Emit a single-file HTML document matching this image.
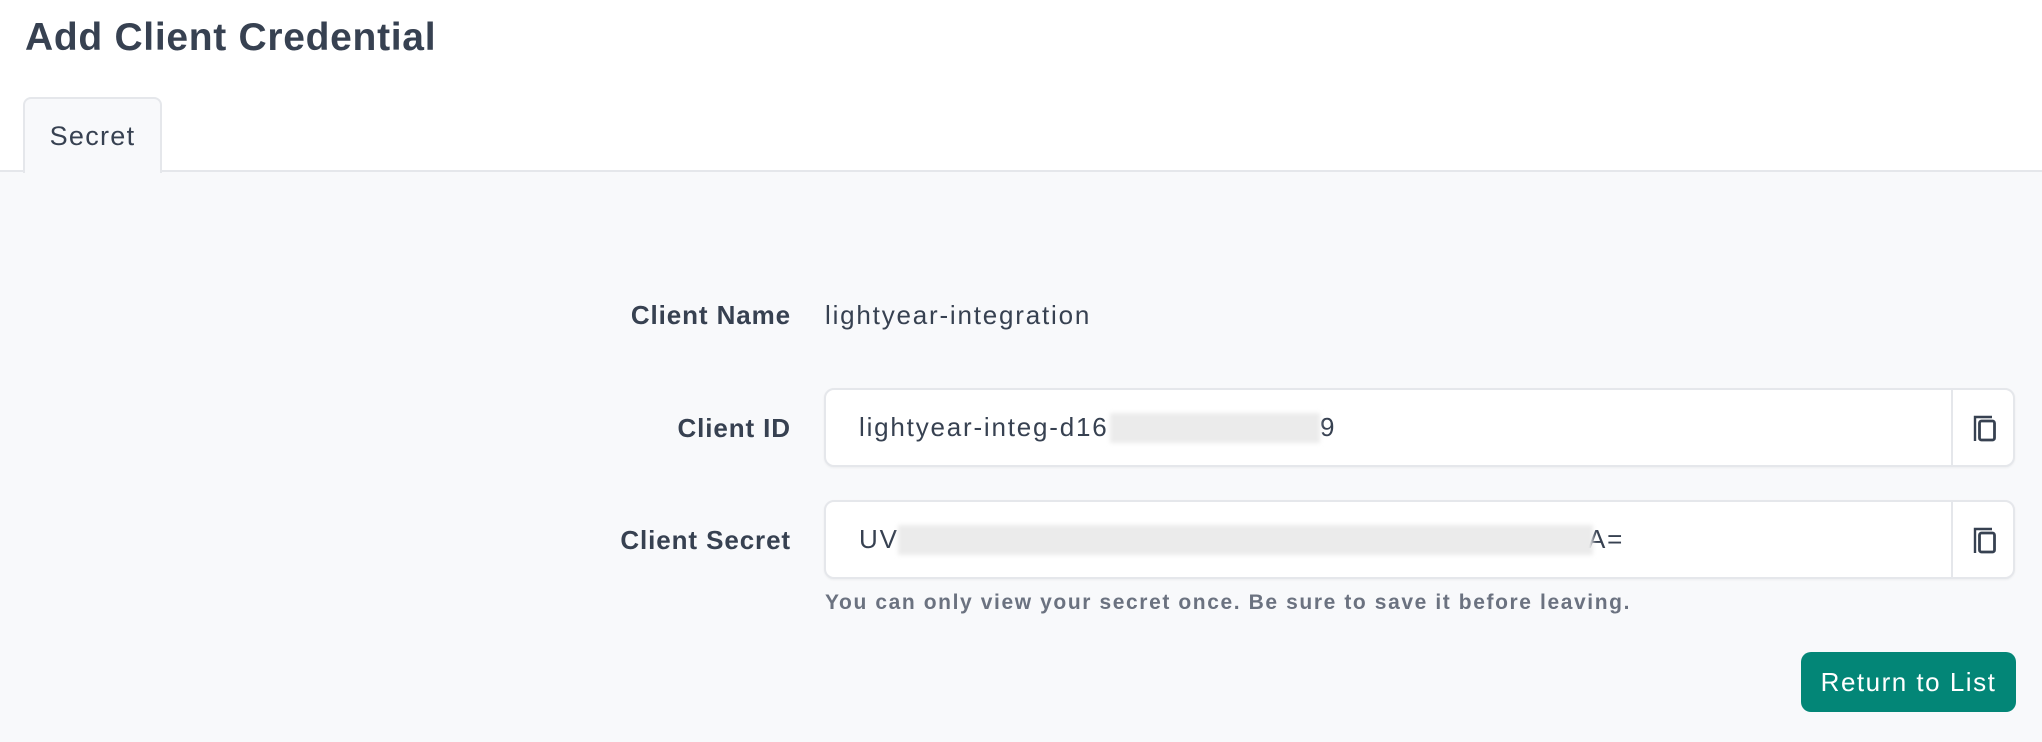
<!DOCTYPE html>
<html><head><meta charset="utf-8"><style>
*{margin:0;padding:0;box-sizing:border-box}
body{width:2042px;height:742px;background:#fff;font-family:"Liberation Sans",sans-serif;color:#374151;position:relative;overflow:hidden}
.a{position:absolute}
h1{position:absolute;left:25px;top:16px;font-size:39px;font-weight:bold;color:#374151;letter-spacing:0.7px}
.tab{left:23px;top:97px;width:139px;height:76px;background:#f8f9fb;border:2px solid #e5e7eb;border-bottom:none;border-radius:8px 8px 0 0;font-size:27px;text-align:center;line-height:74px;z-index:2;letter-spacing:1.3px}
.content{left:0;top:170px;width:2042px;height:572px;background:#f8f9fb;border-top:2px solid #e5e7eb}
.lbl{font-size:26px;font-weight:bold;color:#374151;text-align:right;width:500px;left:291px;letter-spacing:0.9px}
.box{left:824px;width:1191px;height:79px;background:#fff;border:2px solid #e5e7eb;border-radius:10px;box-shadow:0 1px 2px rgba(0,0,0,.05)}
.box .t{position:absolute;top:0;line-height:75px;font-size:26px;color:#374151;letter-spacing:1.8px;white-space:nowrap}
.box .cp{position:absolute;right:0;top:0;width:62px;height:75px;border-left:2px solid #e5e7eb}
.blur{position:absolute;height:30px;top:23px;background:#ebebeb;filter:blur(2px)}
.btn{left:1801px;top:652px;width:215px;height:60px;background:#038677;border-radius:10px;color:#fff;font-size:26px;text-align:center;line-height:60px;letter-spacing:1.5px}
</style></head><body>
<h1>Add Client Credential</h1>
<div class="a content"></div>
<div class="a tab">Secret</div>
<div class="a lbl" style="top:300px">Client Name</div>
<div class="a" style="left:825px;top:300px;font-size:26px;letter-spacing:1.8px">lightyear-integration</div>
<div class="a lbl" style="top:413px">Client ID</div>
<div class="a box" style="top:388px"><span class="t" style="left:33px">lightyear-integ-d16</span><span class="t" style="left:494px">9</span><div class="blur" style="left:284px;width:210px"></div>
<div class="cp"><svg width="62" height="75" viewBox="0 0 62 75"><path d="M22 51V27h17" fill="none" stroke="#374151" stroke-width="2.4"/><rect x="26.5" y="31" width="15" height="19" rx="2" fill="none" stroke="#374151" stroke-width="2.8"/></svg></div></div>
<div class="a lbl" style="top:525px">Client Secret</div>
<div class="a box" style="top:500px"><span class="t" style="left:33px">UV</span><span class="t" style="left:762px">A=</span><div class="blur" style="left:72px;width:695px"></div>
<div class="cp"><svg width="62" height="75" viewBox="0 0 62 75"><path d="M22 51V27h17" fill="none" stroke="#374151" stroke-width="2.4"/><rect x="26.5" y="31" width="15" height="19" rx="2" fill="none" stroke="#374151" stroke-width="2.8"/></svg></div></div>
<div class="a" style="left:825px;top:591px;font-size:21px;font-weight:bold;color:#6b7280;letter-spacing:1.6px;white-space:nowrap">You can only view your secret once. Be sure to save it before leaving.</div>
<div class="a btn">Return to List</div>
</body></html>
